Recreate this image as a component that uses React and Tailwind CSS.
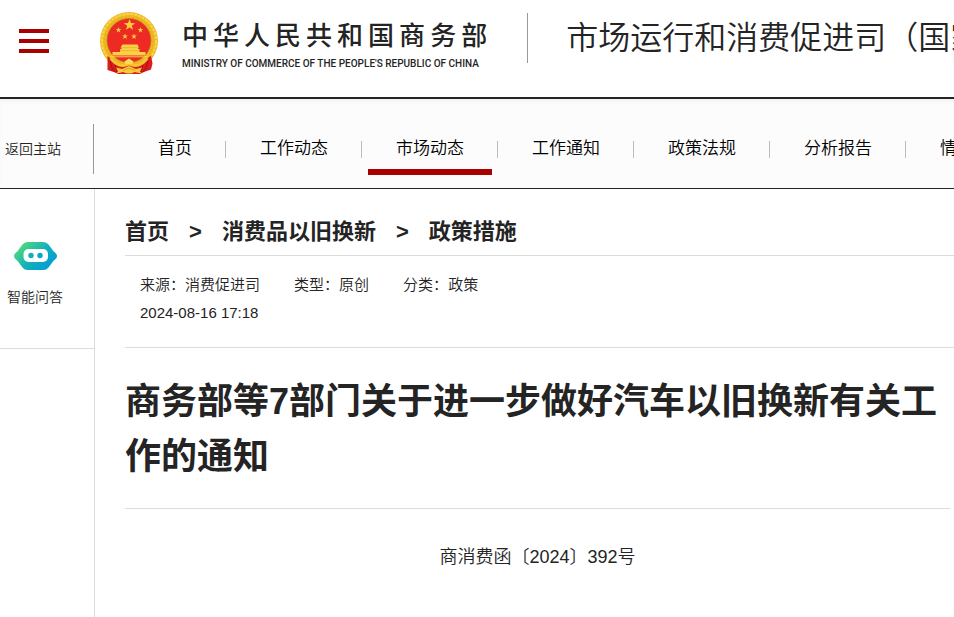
const siteName = '中华人民共和国商务部'

const navItems = ['首页', '工作动态', '市场动态', '工作通知', '政策法规', '分析报告', '情况交流']

const crumbs = ['首页', '消费品以旧换新', '政策措施']

const meta = [
  ['来源', '消费促进司'],
  ['类型', '原创'],
  ['分类', '政策'],
]

function Star({ x, y, r }) {
  const points = []
  for (let i = 0; i < 10; i++) {
    const a = (Math.PI / 5) * i - Math.PI / 2
    const d = i % 2 ? r * 0.4 : r
    points.push(`${x + d * Math.cos(a)},${y + d * Math.sin(a)}`)
  }
  return <polygon points={points.join(' ')} fill="#f6cf3c" />
}

function Emblem() {
  return (
    <svg className="h-[63px] w-[59px] shrink-0" viewBox="0 0 59 63" aria-hidden="true">
      <circle cx="29" cy="29" r="29" fill="#efb823" />
      <circle cx="29" cy="29" r="27" fill="none" stroke="#f8d64c" strokeWidth="2" strokeDasharray="3 1" />
      <circle cx="29" cy="29" r="24" fill="none" stroke="#e3a920" strokeWidth="1" strokeDasharray="2 2" />
      <circle cx="29" cy="28.5" r="22" fill="#ee2a24" stroke="#b8781a" strokeWidth="0.7" />
      <Star x={29.5} y={13} r={6} />
      <Star x={18.5} y={18} r={3} />
      <Star x={40.5} y={18} r={3} />
      <Star x={25} y={24.5} r={3} />
      <Star x={34} y={24.5} r={3} />
      {/* gate tower */}
      <path d="M22.5 32.500h15l1.500 3h-1v1.500h1.500v3h6v3.600H12.500v-3.600h7.500v-3h1.500v-1.500h-1z" fill="#f8d144" />
      <path d="M22 35.6h15.500M20 38.600h19" stroke="#e0a52a" strokeWidth="0.6" />
      <path d="M10 44.800h38" stroke="#f9dc5c" strokeWidth="0.9" />
      {/* ribbons */}
      <path d="M7.500 44l8 6 8 3.500 5.500-1.500 6 1.500 8-3.500 8-6.500 1.500 8-1.500 6-7 2.500-4 2H18l-3-1.500-7.500-2.500z" fill="#db1c1d" />
      <path d="M10 48l2 8 3 4M48 48l-2 8-3 4M15 52l2 8M43 52l-2 8" stroke="#a90f13" strokeWidth="1" fill="none" />
      <path d="M12 45.500c5 6 11 8.500 17 4.500 6 4 12 1.500 17-4.500l2.500 1.500c-6 8-13 9.500-19.500 6.500-6.500 3-13.500 1.500-19.500-6.500z" fill="#f5c631" />
      <path d="M24.500 49.500l4.500-3 4.500 3-1 2.500h-7z" fill="#f9dc5c" />
      <path d="M16 55.500l6 1.500 7-3 7 3 6-1.500-2 4 1.500 2-7-1.500c-3 2-8 2-11 0l-7 1.500 1.500-2z" fill="#f5cb3b" />
      <path d="M23 58.500q6-4 12 0" stroke="#e0921f" strokeWidth="0.8" fill="none" />
    </svg>
  )
}

function RobotIcon() {
  return (
    <svg className="h-7 w-[43px]" viewBox="0 0 43 28" aria-hidden="true">
      <defs>
        <linearGradient id="robot" x1="0" y1="0.2" x2="0.8" y2="0.8">
          <stop offset="0.15" stopColor="#45d483" />
          <stop offset="0.6" stopColor="#13b1ba" />
          <stop offset="1" stopColor="#079fd0" />
        </linearGradient>
      </defs>
      <path
        d="M13.500 0h16q3 0 5 2.500l3 4q1.500 2.500 3.500 4 2 1.500 2 3.500t-2 3.500q-2 1.500-3.500 4l-3 4Q32.500 28 29.500 28h-16q-3 0-5-2.500l-3-4Q4 19 2 17.500 0 16 0 14t2-3.500Q4 9 5.500 6.500l3-4Q10.500 0 13.500 0z"
        fill="url(#robot)"
      />
      <rect x="9.500" y="7" width="24.500" height="13" rx="5" fill="#fff" />
      <circle cx="17" cy="13.500" r="2.700" fill="#10adbd" />
      <circle cx="26" cy="13.500" r="2.700" fill="#0aa6c8" />
    </svg>
  )
}

function Header() {
  return (
    <header className="flex items-start overflow-hidden border-b-2 border-[#242424] pb-[22px] pl-[19px]">
      <button type="button" aria-label="菜单" className="mt-[29px] flex w-[30px] shrink-0 flex-col gap-[6px]">
        <span className="h-1 w-full bg-[#a90000]" />
        <span className="h-1 w-full bg-[#a90000]" />
        <span className="h-1 w-full bg-[#a90000]" />
      </button>
      <a href="#" className="ml-[51px] mt-3 flex shrink-0 gap-[23px]">
        <Emblem />
        <span className="flex flex-col">
          <span className="mt-1 flex gap-[5px] text-[26px] leading-10 font-medium">
            {[...siteName].map((c, i) => (
              <span key={i}>{c}</span>
            ))}
          </span>
          <span className="font-['Roboto',sans-serif] text-[10px] leading-4 font-medium whitespace-nowrap">
            MINISTRY OF COMMERCE OF THE PEOPLE'S REPUBLIC OF CHINA
          </span>
        </span>
      </a>
      <div className="mt-[13px] ml-10 flex h-[50px] items-center border-l border-[#999] pl-[38px] text-[32px] font-[350] whitespace-nowrap">
        市场运行和消费促进司（国家茧丝绸协调办公室）
      </div>
    </header>
  )
}

function Nav() {
  return (
    <nav className="flex items-start overflow-hidden border-b border-[#242424] bg-[#fcfcfc] pt-[25px] pb-[14px] shadow-[inset_0_4px_4px_-2px_#f0f0f0]">
      <a href="#" className="flex h-[50px] w-[94px] shrink-0 items-center border-r border-[#999] pl-[5px] text-sm">
        返回主站
      </a>
      <ul className="ml-[30px] flex h-[50px] items-center text-[17px] leading-6 text-black">
        {navItems.map((item) => (
          <li key={item} className="relative flex shrink-0 items-center">
            <a href="#" className="pl-[34px] pr-[33px] whitespace-nowrap">{item}</a>
            <span className="h-[17px] w-px bg-[#bbb]" />
            {item === '市场动态' && <span className="absolute inset-x-[6px] top-8 h-[6px] bg-[#a90000]" />}
          </li>
        ))}
      </ul>
    </nav>
  )
}

function Sidebar() {
  return (
    <aside className="w-[95px] shrink-0 border-r border-[#dcdcdc]">
      <a href="#" className="flex h-40 flex-col border-b border-[#dcdcdc] pt-[53px] pl-[7px] text-sm">
        <span className="pl-[7px]">
          <RobotIcon />
        </span>
        <span className="mt-[17px]">智能问答</span>
      </a>
    </aside>
  )
}

function Article() {
  return (
    <main className="min-w-0 grow pl-[30px]">
      <div className="flex gap-5 border-b border-[#dcdcdc] pt-[27px] pb-[7px] text-[22px] leading-8 font-bold">
        {crumbs.map((c, i) => (
          <span key={c} className="flex gap-5">
            {i > 0 && <span>&gt;</span>}
            <a href="#">{c}</a>
          </span>
        ))}
      </div>
      <div className="border-b border-[#dcdcdc] pt-[15px] pb-5 pl-[15px] text-[15px] leading-7">
        <div className="flex gap-[34px]">
          {meta.map(([label, value]) => (
            <span key={label}>{label}：{value}</span>
          ))}
        </div>
        <div>2024-08-16 17:18</div>
      </div>
      <div className="pr-1">
        <h1 className="border-b border-[#dcdcdc] pt-[26px] pb-6 text-[36px] leading-[55px] font-bold">
          商务部等7部门关于进一步做好汽车以旧换新有关工作的通知
        </h1>
        <p className="pt-8 text-center text-[18px] leading-8">商消费函〔2024〕392号</p>
      </div>
    </main>
  )
}

export default function App() {
  return (
    <div
      lang="zh-CN"
      className="flex min-h-screen flex-col overflow-hidden bg-white font-['Liberation_Sans','Noto_Sans_CJK_SC',sans-serif] font-[350] text-[#242424]"
    >
      <Header />
      <Nav />
      <div className="flex grow">
        <Sidebar />
        <Article />
      </div>
    </div>
  )
}
